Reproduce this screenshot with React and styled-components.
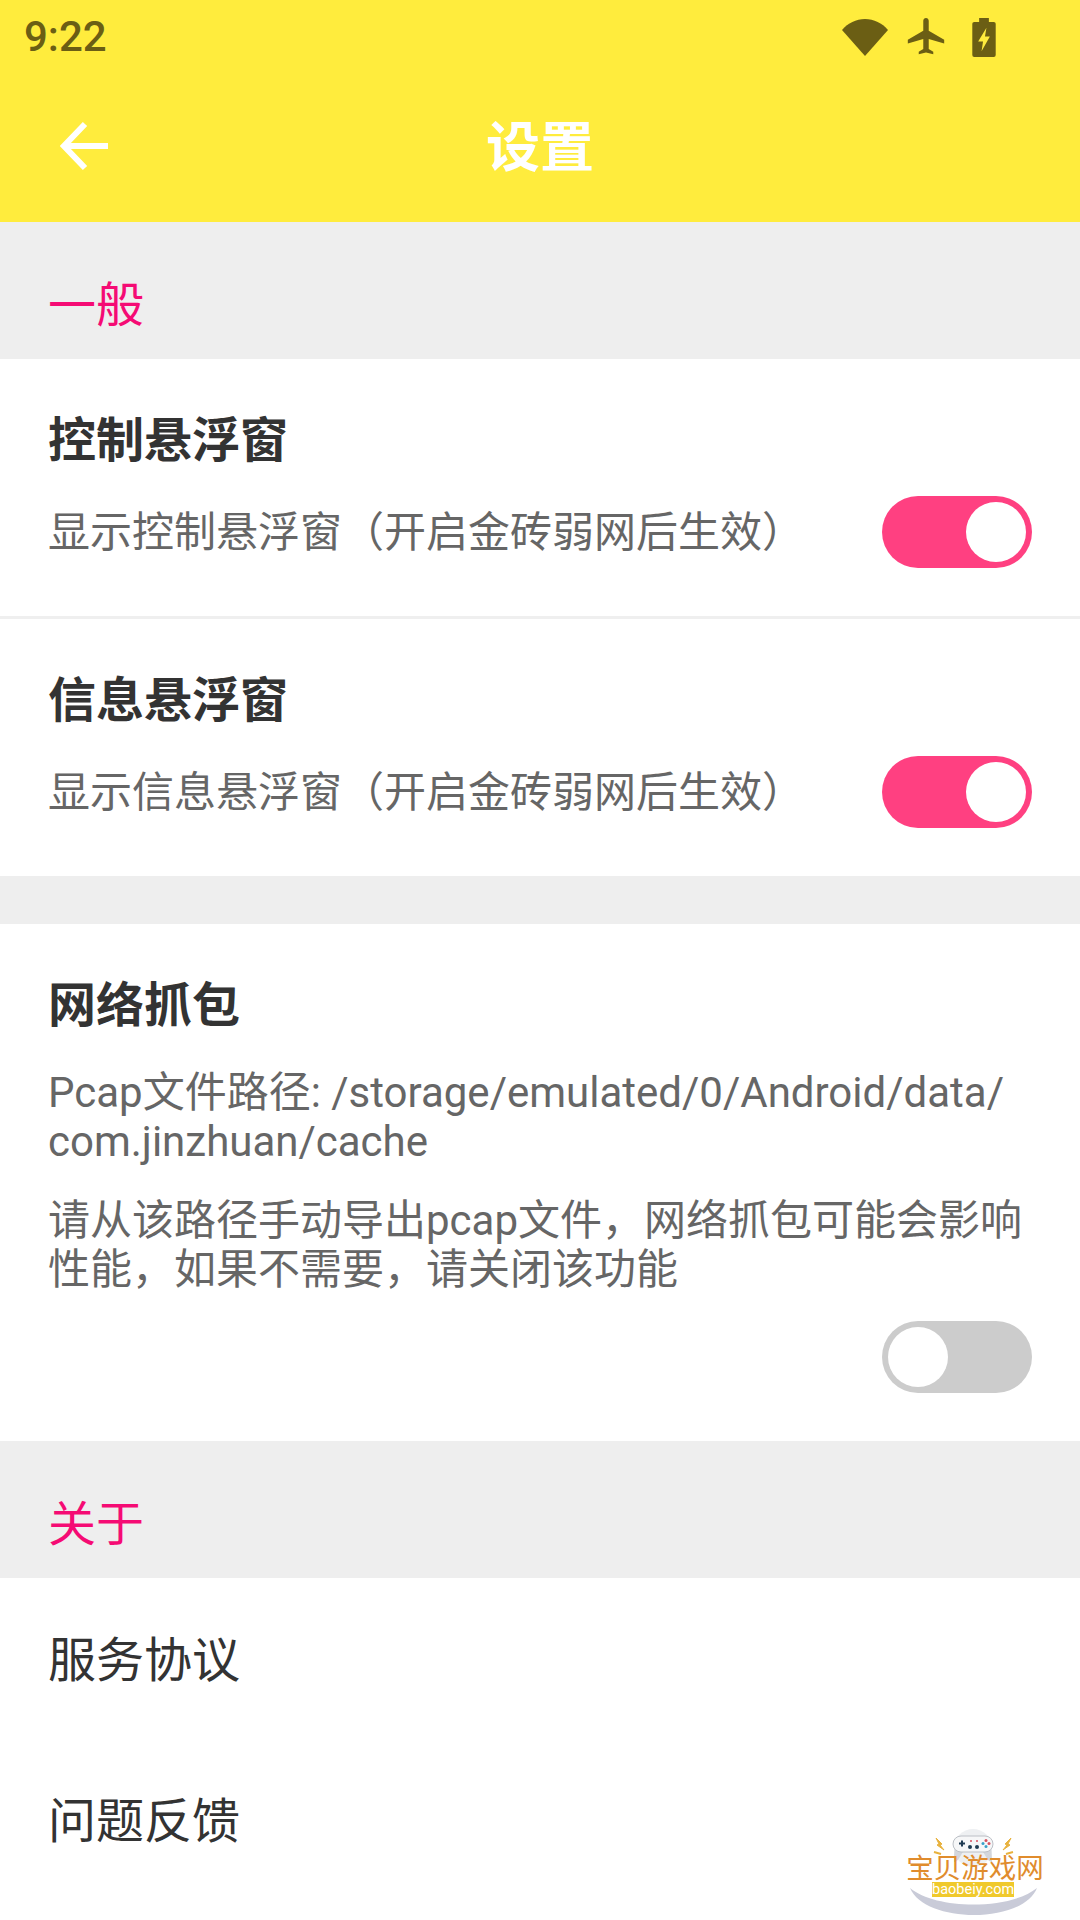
import React from "react";
import styled, { createGlobalStyle } from "styled-components";

const GlobalStyle = createGlobalStyle`
  html, body {
    margin: 0;
    padding: 0;
    background: #fff;
  }
  body {
    font-family: Roboto, "Noto Sans CJK SC", sans-serif;
  }
`;

const Page = styled.div`
  position: relative;
  width: 1080px;
  height: 1920px;
  overflow: hidden;
  background: #fff;
`;

const Header = styled.header`
  height: 222px;
  background: #ffec3d;
  display: flex;
  flex-direction: column;
`;

const StatusBar = styled.div`
  height: 74px;
  padding: 0 24px;
  display: flex;
  align-items: center;
  justify-content: space-between;
  color: #6b5e14;
`;

const Clock = styled.span`
  font-size: 42px;
  font-weight: 500;
  line-height: 74px;
`;

const StatusIcons = styled.div`
  display: flex;
  align-items: center;
  margin-right: 60px;
  gap: 18px;
`;

const BatteryIcon = styled.svg`
  margin-left: 8px;
`;

const TitleBar = styled.div`
  flex: 1;
  position: relative;
  display: flex;
  align-items: center;
  justify-content: center;
  padding-bottom: 9px;
`;

const BackButton = styled.svg`
  position: absolute;
  left: 60px;
  top: 50%;
  margin-top: -27px;
`;

const Title = styled.h1`
  margin: 0;
  font-size: 54px;
  font-weight: 700;
  color: #fff;
`;

const SectionLabel = styled.div`
  height: 137px;
  box-sizing: border-box;
  padding: 0 48px 23px;
  background: #eeeeee;
  display: flex;
  align-items: flex-end;
  font-size: 48px;
  line-height: 60px;
  color: #f50b74;
`;

const Spacer = styled.div`
  height: 48px;
  background: #eeeeee;
`;

const Row = styled.div`
  height: 257px;
  box-sizing: border-box;
  padding: 50px 48px 0;
`;

const Divider = styled.div`
  height: 3px;
  background: #efefef;
`;

const RowTitle = styled.div`
  font-size: 48px;
  font-weight: 700;
  line-height: 64px;
  color: #333;
`;

const RowBody = styled.div`
  margin-top: 23px;
  display: flex;
  align-items: center;
  justify-content: space-between;
`;

const Desc = styled.div`
  font-size: 42px;
  line-height: 49px;
  color: #666;
  margin-top: ${(p) => p.$top || 0}px;
`;

const Toggle = styled.div`
  flex: none;
  width: 150px;
  height: 72px;
  box-sizing: border-box;
  padding: 6px;
  border-radius: 36px;
  display: flex;
  justify-content: ${(p) => (p.$on ? "flex-end" : "flex-start")};
  background: ${(p) => (p.$on ? "#ff4081" : "#cccccc")};
`;

const Knob = styled.div`
  width: 60px;
  height: 60px;
  border-radius: 50%;
  background: #fff;
`;

const CaptureRow = styled.div`
  height: 517px;
  box-sizing: border-box;
  padding: 50px 48px 0;
`;

const ToggleLine = styled.div`
  margin-top: 27px;
  display: flex;
  justify-content: flex-end;
`;

const LinkRow = styled.div`
  height: 161px;
  box-sizing: border-box;
  padding: 0 0 5px 48px;
  display: flex;
  align-items: center;
  font-size: 48px;
  color: #333;
`;

const Watermark = styled.div`
  position: absolute;
  left: 905px;
  top: 1826px;
  width: 140px;
  height: 94px;
`;

const MarkArt = styled.svg`
  position: absolute;
  left: 0;
  top: 0;
`;

const MarkName = styled.div`
  position: absolute;
  top: 30px;
  left: 0;
  width: 140px;
  text-align: center;
  font-size: 27.5px;
  line-height: 26px;
  color: #e08c2d;
  white-space: nowrap;
`;

const MarkDomain = styled.div`
  position: absolute;
  top: 56px;
  left: 27px;
  width: 82px;
  height: 15px;
  background: #f0c92c;
  color: #fff;
  font-size: 14.5px;
  line-height: 15px;
  text-align: center;
`;

function Wifi() {
  return (
    <svg width="46" height="38" viewBox="0 0 46 38">
      <path d="M0 12C6 5 14 1 23 1s17 4 23 11L23 38z" fill="#6b5e14" />
    </svg>
  );
}

function Plane() {
  return (
    <svg width="40" height="38" viewBox="1 2 22 20.900">
      <path
        d="M22 16v-2l-8.500-5V3.500C13.500 2.670 12.830 2 12 2s-1.500.67-1.500 1.500V9L2 14v2l8.500-2.500V19L8 20.500V22l4-1 4 1v-1.500L13.500 19v-5.500z"
        fill="#6b5e14"
      />
    </svg>
  );
}

function Battery() {
  return (
    <BatteryIcon width="24" height="39" viewBox="0 0 24 40">
      <path
        d="M7 0h10v4h5a2 2 0 0 1 2 2v32a2 2 0 0 1-2 2H2a2 2 0 0 1-2-2V6a2 2 0 0 1 2-2h5z"
        fill="#6b5e14"
      />
      <path d="M14.500 10L6 24h5l-1.500 10L18 19h-5z" fill="#ffec3d" />
    </BatteryIcon>
  );
}

function Switch({ on }) {
  return (
    <Toggle $on={on}>
      <Knob />
    </Toggle>
  );
}

export default function App() {
  return (
    <Page>
      <GlobalStyle />
      <Header>
        <StatusBar>
          <Clock>9:22</Clock>
          <StatusIcons>
            <Wifi />
            <Plane />
            <Battery />
          </StatusIcons>
        </StatusBar>
        <TitleBar>
          <BackButton width="50" height="50" viewBox="0 0 50 50">
            <path d="M48 25H6M25 3L4 25l21 22" fill="none" stroke="#fff" strokeWidth="6" />
          </BackButton>
          <Title>设置</Title>
        </TitleBar>
      </Header>

      <SectionLabel>一般</SectionLabel>
      <Row>
        <RowTitle>控制悬浮窗</RowTitle>
        <RowBody>
          <Desc>显示控制悬浮窗（开启金砖弱网后生效）</Desc>
          <Switch on />
        </RowBody>
      </Row>
      <Divider />
      <Row>
        <RowTitle>信息悬浮窗</RowTitle>
        <RowBody>
          <Desc>显示信息悬浮窗（开启金砖弱网后生效）</Desc>
          <Switch on />
        </RowBody>
      </Row>
      <Spacer />
      <CaptureRow>
        <RowTitle>网络抓包</RowTitle>
        <Desc $top={30}>
          Pcap文件路径: /storage/emulated/0/Android/data/
          <br />
          com.jinzhuan/cache
        </Desc>
        <Desc $top={30}>请从该路径手动导出pcap文件，网络抓包可能会影响性能，如果不需要，请关闭该功能</Desc>
        <ToggleLine>
          <Switch />
        </ToggleLine>
      </CaptureRow>

      <SectionLabel>关于</SectionLabel>
      <LinkRow>服务协议</LinkRow>
      <LinkRow>问题反馈</LinkRow>

      <Watermark>
        <MarkArt width="140" height="94" viewBox="0 0 140 94">
          <path d="M5 62c26 22 100 22 127 0c-14 36-112 36-127 0z" fill="#c9cbd8" />
          <g transform="translate(-2 0)">
            <circle cx="70" cy="22" r="19" fill="#eef0f2" />
            <path
              d="M51 36c0-12 1-18 4-22h30c3 4 4 10 4 22c-4 0-6-6-9-10c-3-2-17-2-20 0c-3 4-5 10-9 10z"
              fill="#d3d6dc"
            />
            <rect x="50" y="10" width="40" height="16" rx="8" fill="#f6f7f8" stroke="#bcc0c6" />
            <path d="M56 16.500h2v-2h2v2h2v2h-2v2h-2v-2h-2z" fill="#1f3b52" />
            <circle cx="68" cy="15" r="1" fill="#d8505f" />
            <circle cx="74" cy="15" r="1" fill="#d8505f" />
            <circle cx="67" cy="21" r="2" fill="#1f3b52" />
            <circle cx="74" cy="21" r="2" fill="#1f3b52" />
            <circle cx="83" cy="14.500" r="1.500" fill="#d8505f" />
            <circle cx="83" cy="20.500" r="1.500" fill="#3aa0c8" />
            <circle cx="80" cy="17.500" r="1.500" fill="#3aa0c8" />
            <circle cx="86" cy="17.500" r="1.500" fill="#d8505f" />
          </g>
          <path d="M31 12l6 6-2 1 4 5-7-5 2-1zM106 12l-6 6 2 1-4 5 7-5-2-1z" fill="#e8b23e" stroke="#e8b23e" />
          <path d="M29 26l7 2M108 26l-7 2" stroke="#e8b23e" strokeWidth="2" />
        </MarkArt>
        <MarkName>宝贝游戏网</MarkName>
        <MarkDomain>baobeiy.com</MarkDomain>
      </Watermark>
    </Page>
  );
}
